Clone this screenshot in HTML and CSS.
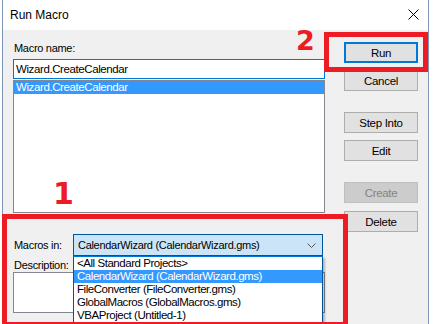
FILE: index.html
```html
<!DOCTYPE html>
<html>
<head>
<meta charset="utf-8">
<link rel="stylesheet" href="styles.css">
</head>
<body>
<div class="window">
  <div class="titlebar">
    <span class="title">Run Macro</span>
    <svg class="close" width="11" height="11" viewBox="0 0 11 11"><path d="M0.5 0.5 L10.5 10.5 M10.5 0.5 L0.5 10.5" stroke="#000" stroke-width="1" fill="none"/></svg>
  </div>
  <div class="content">
    <div class="left">
      <div class="label first">Macro name:</div>
      <div class="input">Wizard.CreateCalendar</div>
      <div class="listbox">
        <div class="item selected">Wizard.CreateCalendar</div>
      </div>
      <div class="macros-row">
        <span class="label">Macros in:</span>
        <div class="combo">
          <span>CalendarWizard (CalendarWizard.gms)</span>
          <svg class="chev" width="9" height="5" viewBox="0 0 9 5"><path d="M0.5 0.5 L4.5 4.5 L8.5 0.5" stroke="#555" stroke-width="1" fill="none"/></svg>
        </div>
      </div>
      <div class="label desc-label">Description:</div>
      <div class="desc"></div>
    </div>
    <div class="right">
      <div class="btn default">Run</div>
      <div class="btn gap-s">Cancel</div>
      <div class="btn gap-l">Step Into</div>
      <div class="btn gap-s">Edit</div>
      <div class="btn disabled gap-l">Create</div>
      <div class="btn gap-s">Delete</div>
    </div>
  </div>
  <ul class="dropdown">
    <li>&lt;All Standard Projects&gt;</li>
    <li class="selected">CalendarWizard (CalendarWizard.gms)</li>
    <li>FileConverter (FileConverter.gms)</li>
    <li>GlobalMacros (GlobalMacros.gms)</li>
    <li>VBAProject (Untitled-1)</li>
  </ul>
  <div class="mark mark-2"></div>
  <div class="mark mark-1"></div>
  <div class="num num-2">2</div>
  <div class="num num-1">1</div>
</div>
</body>
</html>
```
FILE: styles.css
```css
html, body {
  margin: 0;
  padding: 0;
  background: #ffffff;
  overflow: hidden;
  width: 433px;
  height: 324px;
}
body {
  font-family: "Liberation Sans", Arial, sans-serif;
  font-size: 11px;
  letter-spacing: -0.3px;
  color: #000;
}
.window {
  position: relative;
  margin-left: 2px;
  width: 427px;
  height: 324px;
  box-sizing: border-box;
  border-left: 1px solid #7d97b8;
  border-right: 1px solid #7d97b8;
  background: #f0f0f0;
}
.titlebar {
  height: 30px;
  background: #ffffff;
  display: flex;
  align-items: center;
  justify-content: space-between;
}
.title {
  font-size: 12px;
  letter-spacing: 0;
  margin-left: 7px;
  margin-top: -1px;
}
.close {
  margin-right: 9px;
  margin-top: -2px;
}
.content {
  display: flex;
}
.left {
  margin-left: 10px;
  width: 312px;
  display: flex;
  flex-direction: column;
}
.label {
  line-height: 13px;
  height: 13px;
  margin-left: 1px;
}
.label.first {
  margin-top: 12px;
}
.input {
  margin-top: 4px;
  height: 20px;
  box-sizing: border-box;
  border: 1px solid #0078d7;
  background: #fff;
  font-size: 11.5px;
  line-height: 18px;
  padding-left: 2px;
  letter-spacing: -0.4px;
}
.listbox {
  margin-top: 1px;
  height: 133px;
  box-sizing: border-box;
  border: 1px solid #828790;
  background: #fff;
}
.item {
  height: 13px;
  line-height: 13px;
  font-size: 11.5px;
  letter-spacing: -0.4px;
  padding-left: 2px;
}
.item.selected {
  background: #3399ff;
  color: #fff;
}
.macros-row {
  margin-top: 21px;
  display: flex;
  align-items: center;
}
.macros-row .label {
  width: 59px;
}
.combo {
  width: 250px;
  height: 22px;
  box-sizing: border-box;
  border: 1px solid #005499;
  background: #cce4f7;
  display: flex;
  align-items: center;
  justify-content: space-between;
  padding-left: 4px;
  padding-right: 6px;
  font-size: 11px;
}
.chev {
  margin-top: 1px;
}
.desc-label {
  margin-top: 3px;
}
.desc {
  height: 41px;
  box-sizing: border-box;
  border: 1px solid #828790;
  background: #fff;
}
.right {
  margin-left: 19px;
  width: 74px;
  display: flex;
  flex-direction: column;
  padding-top: 12px;
}
.btn {
  height: 21px;
  box-sizing: border-box;
  border: 1px solid #adadad;
  background: #e1e1e1;
  display: flex;
  align-items: center;
  justify-content: center;
  font-size: 11.5px;
}
.btn.default {
  border: 2px solid #0078d7;
}
.btn.gap-s {
  margin-top: 7px;
}
.btn.gap-l {
  margin-top: 21px;
}
.btn.disabled {
  background: #cccccc;
  border-color: #bfbfbf;
  color: #838383;
}
.btn.disabled + .btn {
  margin-top: 8px;
}
.dropdown {
  position: absolute;
  left: 70px;
  top: 256px;
  width: 250px;
  height: 67px;
  box-sizing: border-box;
  margin: 0;
  padding: 0;
  list-style: none;
  background: #fff;
  border: 1px solid #005499;
  border-top-color: #0078d7;
  box-shadow: 2px 2px 2px rgba(0, 0, 0, 0.25);
}
.dropdown li {
  height: 13px;
  line-height: 13px;
  padding-left: 3px;
  font-size: 11.5px;
  letter-spacing: -0.45px;
}
.dropdown li.selected {
  background: #3399ff;
  color: #fff;
}
.mark {
  position: absolute;
  box-sizing: border-box;
  border: 5px solid #ed1c24;
}
.mark-2 {
  left: 321px;
  top: 32px;
  width: 104px;
  height: 40px;
}
.mark-1 {
  left: -1px;
  top: 214px;
  width: 346px;
  height: 113px;
}
.num {
  position: absolute;
  font-family: "DejaVu Sans", sans-serif;
  font-weight: bold;
  color: #ed1c24;
  letter-spacing: 0;
  line-height: 1;
}
.num-2 {
  left: 293px;
  top: 27px;
  font-size: 27px;
}
.num-1 {
  left: 50px;
  top: 179px;
  font-size: 30px;
}
```
